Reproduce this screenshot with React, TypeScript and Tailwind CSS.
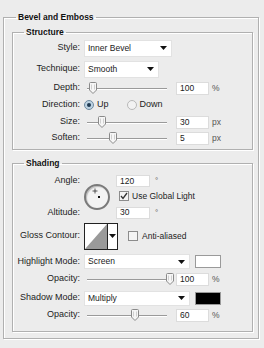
import React from "react";

const font = { fontFamily: '"Liberation Sans", Arial, sans-serif' };

function Tri() {
  return (
    <svg width="7" height="4" viewBox="0 0 7 4" className="shrink-0">
      <path d="M0 0h7L3.5 4z" fill="#111" />
    </svg>
  );
}

function Select({ value, w, h = "h-[17px]" }: { value: string; w: string; h?: string }) {
  return (
    <div className={`${w} ${h} flex items-center justify-between border border-[#e2e2e2] bg-white pl-[3px] pr-[4px] text-[8.5px] text-[#222]`}>
      <span>{value}</span>
      <Tri />
    </div>
  );
}

function Thumb() {
  return (
    <svg width="8" height="12" viewBox="0 0 8 12">
      <path d="M1.5 0.5h5a1 1 0 0 1 1 1v6.5l-3.5 3.5-3.5-3.5v-6.5a1 1 0 0 1 1-1z" fill="#f6f6f6" stroke="#8a8a8a" />
      <path d="M2.5 2.5v5M5.5 2.5v5" stroke="#d0d0d0" />
    </svg>
  );
}

function Slider({ pos }: { pos: number }) {
  return (
    <div className="relative ml-[4px] h-[12px] w-[86px]">
      <div className="mx-[3px] mt-[6px] h-px bg-[#9a9a9a] shadow-[0_1px_0_#fff]" />
      <div className="absolute top-0" style={{ left: pos }}>
        <Thumb />
      </div>
    </div>
  );
}

function Field({ value, unit }: { value: string; unit: string }) {
  return (
    <>
      <div className="ml-[6px] flex h-[13px] w-[33px] items-center border border-[#dcdcdc] bg-white pl-[3px] text-[8.5px] text-[#222]">
        {value}
      </div>
      <span className="ml-[3px] text-[8.5px] text-[#555]">{unit}</span>
    </>
  );
}

function Label({ children }: { children: React.ReactNode }) {
  return <div className="w-[67px] shrink-0 text-right text-[9px] text-[#1c1c1c]">{children}</div>;
}

function Check({ checked }: { checked?: boolean }) {
  return (
    <div className="flex h-[10px] w-[10px] items-center justify-center border border-[#8c8c8c] bg-[#f4f4f4]">
      {checked && (
        <svg width="8" height="8" viewBox="0 0 8 8">
          <path d="M1 4l2 2.5L7 1" fill="none" stroke="#333" strokeWidth="1.3" />
        </svg>
      )}
    </div>
  );
}

const box =
  "border border-[#b0b0b0] shadow-[1px_1px_0_#fff,inset_1px_1px_0_#fff]";

export default function App() {
  return (
    <div className="h-[348px] w-[264px] bg-[#ececec] pt-[11px]" style={font}>
      <fieldset className={`ml-[3px] h-[328px] w-[256px] ${box}`}>
        <legend className="ml-[12px] px-[2px] text-[8.5px] font-bold leading-[12px] text-[#111]">Bevel and Emboss</legend>

        <fieldset className={`ml-[8px] mt-[3px] w-[241px] pb-[3px] ${box}`}>
          <legend className="ml-[11px] px-[2px] text-[8.5px] font-bold leading-[12px] text-[#111]">Structure</legend>
          <div className="flex h-[20px] items-center">
            <Label>Style:</Label>
            <div className="ml-[4px]">
              <Select value="Inner Bevel" w="w-[88px]" />
            </div>
          </div>
          <div className="flex h-[22px] items-center">
            <Label>Technique:</Label>
            <div className="ml-[4px]">
              <Select value="Smooth" w="w-[75px]" />
            </div>
          </div>
          <div className="flex h-[16px] items-center">
            <Label>Depth:</Label>
            <Slider pos={5} />
            <Field value="100" unit="%" />
          </div>
          <div className="flex h-[18px] items-center">
            <Label>Direction:</Label>
            <div className="ml-[4px] flex items-center text-[9px] text-[#1c1c1c]">
              <div className="flex h-[10px] w-[10px] items-center justify-center rounded-full border border-[#6f8aa0] bg-[#bcd2e2]">
                <div className="h-[4px] w-[4px] rounded-full bg-[#1f3a52]" />
              </div>
              <span className="ml-[3px]">Up</span>
              <div className="ml-[18px] h-[10px] w-[10px] rounded-full border border-[#b8b8b8] bg-[#f2f2f2]" />
              <span className="ml-[3px]">Down</span>
            </div>
          </div>
          <div className="flex h-[16px] items-center">
            <Label>Size:</Label>
            <Slider pos={14} />
            <Field value="30" unit="px" />
          </div>
          <div className="flex h-[16px] items-center">
            <Label>Soften:</Label>
            <Slider pos={25} />
            <Field value="5" unit="px" />
          </div>
        </fieldset>

        <fieldset className={`ml-[8px] mt-[7px] w-[241px] pb-[1px] ${box}`}>
          <legend className="ml-[11px] px-[2px] text-[8.5px] font-bold leading-[12px] text-[#111]">Shading</legend>
          <div className="flex h-[51px]">
            <div className="flex w-[67px] shrink-0 flex-col items-end pt-[5px] text-[9px] leading-[12px] text-[#1c1c1c]">
              <span>Angle:</span>
              <span className="mt-[20px]">Altitude:</span>
            </div>
            <div className="ml-[4px] mt-[15px] h-[26px] w-[26px] rounded-full border-[2px] border-[#7a7a7a] bg-[#f3f3f3] shadow-[inset_1px_1px_1px_#bbb]">
              <svg width="22" height="22" viewBox="0 0 22 22">
                <path d="M9 2.5v5M6.5 5h5" stroke="#333" strokeWidth="0.8" />
                <rect x="12" y="10" width="2" height="2" fill="#111" />
              </svg>
            </div>
            <div className="ml-[6px] flex flex-col pt-[6px]">
              <div className="flex items-center">
                <div className="flex h-[12px] w-[34px] items-center border border-[#dcdcdc] bg-white pl-[3px] text-[8.5px] text-[#222]">120</div>
                <span className="ml-[5px] text-[8px] text-[#555]">°</span>
              </div>
              <div className="mt-[3px] flex items-center">
                <div className="ml-[3px]">
                  <Check checked />
                </div>
                <span className="ml-[3px] text-[8.5px] text-[#1c1c1c]">Use Global Light</span>
              </div>
              <div className="mt-[4px] flex items-center">
                <div className="flex h-[12px] w-[34px] items-center border border-[#dcdcdc] bg-white pl-[3px] text-[8.5px] text-[#222]">30</div>
                <span className="ml-[5px] text-[8px] text-[#555]">°</span>
              </div>
            </div>
          </div>
          <div className="flex h-[32px] items-center">
            <Label>Gloss Contour:</Label>
            <div className="ml-[4px] flex h-[27px] w-[34px] border border-[#222] bg-white">
              <svg width="22" height="25" viewBox="0 0 22 25" className="shrink-0">
                <path d="M0 25L22 0V25z" fill="#9a9a9a" />
              </svg>
              <div className="flex flex-1 items-center justify-center border-l border-[#222]">
                <Tri />
              </div>
            </div>
            <div className="ml-[10px]">
              <Check />
            </div>
            <span className="ml-[4px] text-[8.5px] text-[#1c1c1c]">Anti-aliased</span>
          </div>
          <div className="flex h-[19px] items-center">
            <Label>Highlight Mode:</Label>
            <div className="ml-[4px]">
              <Select value="Screen" w="w-[106px]" h="h-[15px]" />
            </div>
            <div className="ml-[5px] h-[13px] w-[26px] border border-[#9a9a9a] bg-white" />
          </div>
          <div className="flex h-[16px] items-center">
            <Label>Opacity:</Label>
            <Slider pos={82} />
            <Field value="100" unit="%" />
          </div>
          <div className="mt-[2px] flex h-[18px] items-center">
            <Label>Shadow Mode:</Label>
            <div className="ml-[4px]">
              <Select value="Multiply" w="w-[106px]" h="h-[15px]" />
            </div>
            <div className="ml-[5px] h-[13px] w-[26px] border border-[#9a9a9a] bg-black" />
          </div>
          <div className="flex h-[16px] items-center">
            <Label>Opacity:</Label>
            <Slider pos={47} />
            <Field value="60" unit="%" />
          </div>
          <div className="h-[7px]" />
        </fieldset>
      </fieldset>
    </div>
  );
}
